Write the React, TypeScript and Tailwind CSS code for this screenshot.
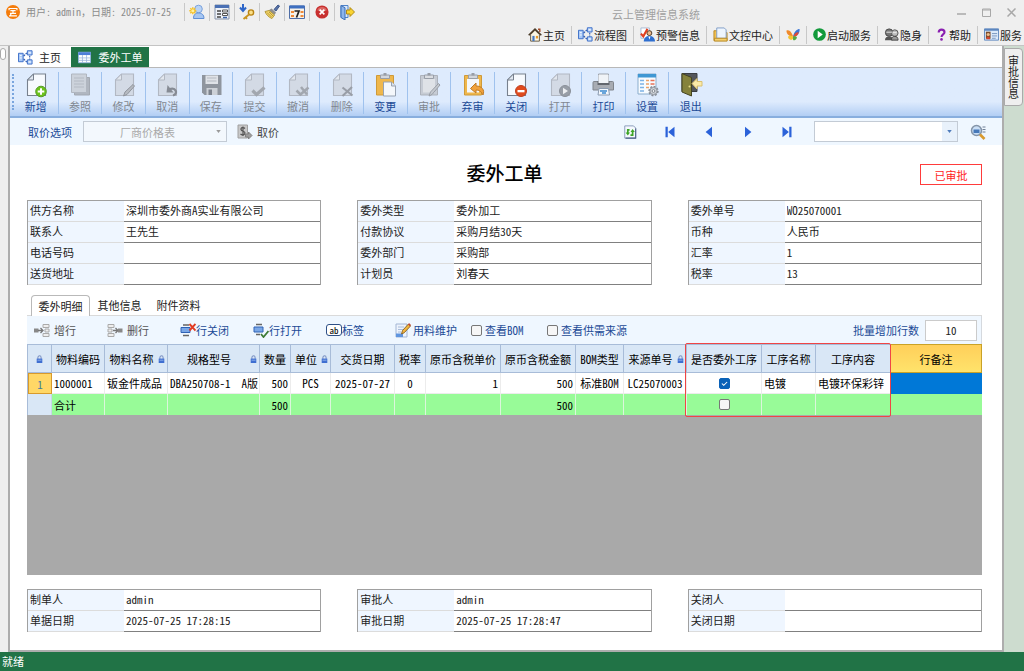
import React from "react";

type Children = { children?: React.ReactNode };

function Glyph({ children, box = 16, cls = "size-4" }: Children & { box?: number; cls?: string }) {
  return (
    <svg viewBox={`0 0 ${box} ${box}`} className={`${cls} shrink-0`} fill="none" aria-hidden="true">
      {children}
    </svg>
  );
}

/* ---------- small icons ---------- */

const LogoIcon = () => (
  <Glyph cls="size-[14px]">
    <circle cx="8" cy="8" r="8" fill="#f57c0b" />
    <path d="M3.500 6V4h9v2M5 6.500h6M8 6.500v3M4.500 9.500h7M6 9.500l-1 2.500M3.500 12.500h9" stroke="#fff" strokeWidth="1.300" />
  </Glyph>
);
const UserStarIcon = () => (
  <Glyph>
    <circle cx="9.500" cy="5" r="3.800" fill="#b9d3f5" stroke="#7ba2dc" />
    <path d="M4.500 14.500c0-4 2-5.500 5-5.500s5.500 1.500 5.500 5.500z" fill="#a6c6f2" stroke="#5f8fd6" />
    <path d="M3.800 3.200v7M.3 6.700h7M1.300 4.200l5 5M6.300 4.200l-5 5" stroke="#f6c22b" strokeWidth="1.500" />
    <circle cx="3.800" cy="6.700" r="1.500" fill="#fff1a0" />
  </Glyph>
);
const FormIcon = () => (
  <Glyph>
    <path d="M1 1h14v14H1z" fill="#eef2f8" stroke="#8794aa" />
    <path d="M1 1h14v3H1z" fill="#4a70b4" />
    <path d="M3 7h4M3 10h4M3 13h4" stroke="#444" strokeWidth="1.300" />
    <path d="M8.500 6h5v2h-5zM8.500 9.500h5v2h-5z" fill="#fff" stroke="#555" />
    <path d="M9 13.500h4" stroke="#3a62a8" strokeWidth="1.500" />
  </Glyph>
);
const KeyIcon = () => (
  <Glyph>
    <path d="M4 0v6M1 3.500 4 7l3-3.500" stroke="#2e66c9" strokeWidth="2" />
    <circle cx="12" cy="8.500" r="2.600" fill="#fbe08a" stroke="#b98414" strokeWidth="1.400" />
    <path d="M10 10.500 4.500 15M6.500 13l1.500 1.800" stroke="#c9941f" strokeWidth="1.800" />
  </Glyph>
);
const BrushIcon = () => (
  <Glyph>
    <path d="m10 5.500 4-4.500 1.500 1L12 7z" fill="#5873a8" stroke="#3d5688" />
    <path d="M7.500 4.500 12 8.500 10.500 11 4.500 6.500z" fill="#8f8f8f" />
    <path d="M5 6.500 1 7.500c1 3 4 6 7 7l2.500-3.500z" fill="#f3d56a" stroke="#b59a3c" />
    <path d="M3 8.500 7.500 13M5 8l4 4" stroke="#b99b36" />
  </Glyph>
);
const CalendarIcon = () => (
  <Glyph>
    <path d="M.5 2h15v12.500H.5z" fill="#f6f2ea" stroke="#4f6ea6" />
    <path d="M.5 1.500h15v3H.5z" fill="#3e6fc0" />
    <path d="M2 7h3v2H2zM11.500 7h3v2h-3zM2 11h3v2H2zM11.500 11h3v2h-3z" fill="#f08b3a" />
    <path d="M5.500 7H10L7.500 13.500" stroke="#222" strokeWidth="1.700" />
  </Glyph>
);
const StopIcon = () => (
  <Glyph cls="size-[14px]">
    <circle cx="8" cy="8" r="7.500" fill="#c8302f" />
    <path d="M2.500 6C4 1 12 1 13.500 6c-3 2-8 2-11 0z" fill="#e2807c" opacity=".7" />
    <path d="m5.300 5.300 5.400 5.400M10.700 5.300l-5.400 5.400" stroke="#fff" strokeWidth="1.900" />
  </Glyph>
);
const LogoutIcon = () => (
  <Glyph>
    <path d="M2 1.500h7v12H2z" fill="#dbe9fb" stroke="#4f83c9" />
    <path d="m2 1.500 4 2.200V16L2 13.500z" fill="#8cb4ea" stroke="#3b6fb8" />
    <path d="M15.500 8 11 3.500V6H7.500v4H11v2.500z" fill="#f9d331" stroke="#b08a14" />
  </Glyph>
);
const HomeIcon = () => (
  <Glyph cls="size-[14px]">
    <path d="M3 7.500 8 2.500l5 5v7.500H3z" fill="#fbf6e3" stroke="#5a4a33" />
    <path d="M.8 8.300 8 1.300l7.200 7" stroke="#4a3b28" strokeWidth="1.800" />
    <path d="M11.500 1.500h2v3" stroke="#a34a28" strokeWidth="1.600" />
    <path d="M5 9h2.500v6H5z" fill="#4579c2" />
    <path d="M9 9h2.500v3H9z" fill="#e79a2d" />
  </Glyph>
);
const FlowIcon = () => (
  <Glyph cls="size-[15px]">
    <path d="M.5 3.500h5v9h-5z" fill="#a9c9f7" stroke="#3a6cc8" />
    <path d="M10 .8h5v4.500h-5zM10 10.500h5V15h-5z" fill="#bcd6fa" stroke="#3a6cc8" />
    <path d="M2 6h2M2 8.500h2M11.500 3h2M11.500 12.800h2" stroke="#fff" />
    <path d="M6 6.500 9.500 3M6 9.500l3.500 3.500M12.500 6v4" stroke="#2857b0" strokeDasharray="2 1" strokeWidth="1.200" />
  </Glyph>
);
const AlertIcon = () => (
  <Glyph cls="size-[15px]">
    <path d="M1 1h9v11H1z" fill="#fff" stroke="#a9bad3" />
    <circle cx="10" cy="6.500" r="2.600" fill="#e9b98b" stroke="#4a3320" />
    <path d="M4 15.500c0-4 2.500-6 6-6s6 2 6 6z" fill="#2f6fd0" />
    <path d="m9 10 1 3.500 1.200-3.500z" fill="#fff" />
    <path d="m1 7 2.500 3L8 2" stroke="#e0401f" strokeWidth="2.200" />
  </Glyph>
);
const FolderIcon = () => (
  <Glyph cls="size-[15px]">
    <path d="M1 4h5l1 2h8v8.500H1z" fill="#f2c04f" stroke="#b98a25" />
    <path d="M4 1h8l2 2v9H4z" fill="#eef5fd" stroke="#7e9cc6" />
    <path d="M1.500 12h13.500v3H1.500z" fill="#f5cf6b" stroke="#b98a25" />
  </Glyph>
);
const ButterflyIcon = () => (
  <Glyph cls="size-[14px]">
    <path d="M8 9C6 3 2 1.500.5 3c0 3.500 3 6.500 7 6.500z" fill="#f08a2c" />
    <path d="M8 10C9 3.500 13 1 15.500 1c.5 4-2 8-7 9z" fill="#3b76d6" />
    <path d="M8 10C10 6 12 4.500 14.500 5c-.5 3-3 5-6.500 5z" fill="#e14a35" />
    <path d="M8 9.500C4 7.500 2 9 2.500 11c1.500 3 4.500 3 5.500 1z" fill="#f5c431" />
    <path d="M8 10c2-1 4-.5 4.500 1-1.500 3-4 4-4.500 2z" fill="#57a844" />
  </Glyph>
);
const PlayIcon = () => (
  <Glyph cls="size-[13px]">
    <circle cx="8" cy="8" r="7.800" fill="#129a3b" />
    <path d="M5.800 3.500v9L12 8z" fill="#fff" />
  </Glyph>
);
const HiddenIcon = () => (
  <Glyph cls="size-[15px]">
    <circle cx="5.500" cy="6" r="4" fill="#777" stroke="#444" />
    <circle cx="11.500" cy="6.500" r="3.500" fill="#bbb" stroke="#555" />
    <path d="M2.500 5.500h6M9.500 6h4" stroke="#eee" />
    <path d="M1 14c0-3 2-4 4.500-4s4 1 4 4z" fill="#555" />
    <path d="M8 14c0-3 1.500-4 3.500-4S15 11 15 14z" fill="#999" stroke="#444" />
  </Glyph>
);
const HelpIcon = () => (
  <Glyph cls="size-[13px]">
    <path d="M4.500 5.500C4.500 3 6 2 8 2s3.700 1.200 3.700 3.200C11.700 7.800 8 8 8 11" stroke="#8a1fb0" strokeWidth="2.600" />
    <circle cx="8" cy="14" r="1.600" fill="#8a1fb0" />
  </Glyph>
);
const CardIcon = () => (
  <Glyph cls="size-[15px]">
    <path d="M.5 2h15v12H.5z" fill="#dbe9fa" stroke="#5c86bf" />
    <path d="M.5 2h15v2H.5z" fill="#5c86bf" />
    <path d="M2 5h5v7.500H2z" fill="#7b4d2c" />
    <circle cx="4.500" cy="8" r="1.700" fill="#edbd8e" />
    <path d="M2.500 13c0-2 1-3 2-3s2 1 2 3z" fill="#d4442c" />
    <path d="M8.500 7h5.500M8.500 9.500h5.500M8.500 12h4" stroke="#7593bd" />
  </Glyph>
);
const SheetIcon = () => (
  <Glyph cls="size-[13px]">
    <path d="M.5 1.500h15v13H.5z" fill="#fff" stroke="#8db0e6" />
    <path d="M.5 1.500h15v3.500H.5z" fill="#4f7fd8" />
    <path d="M1 8.500h14M1 11.500h14M5.500 5v9.500M10.500 5v9.500" stroke="#9cb6dc" />
  </Glyph>
);
const PriceIcon = () => (
  <Glyph>
    <path d="M1 1h9.500v13H1z" fill="#c9c9c9" stroke="#a0a0a0" />
    <path d="M8 4.500C6.500 3 3.500 3.500 4 5.500s4 1.500 4 3.500-3 2.500-4.500 1M6 2.500v9.500" stroke="#555" strokeWidth="1.200" />
    <path d="M15 11.500 11.500 15v-2H8.500v-3h3V8z" fill="#9d9d9d" stroke="#808080" />
  </Glyph>
);
const RefreshIcon = () => (
  <Glyph cls="size-[14px]">
    <path d="M2 1h10l2.500 2.500V15H2z" fill="#f5f9ff" stroke="#7f92b3" />
    <path d="M14.500 4v11H3" stroke="#4d6186" strokeWidth="1.200" />
    <path d="M7.500 5.500H5.500v4M8.500 11.500h2.500V7" stroke="#3ea526" strokeWidth="2" />
    <path d="m3 8.500 2.500 3.500L8 8.500zM8.500 8 11 4.500 13.500 8z" fill="#3ea526" />
  </Glyph>
);
const StepIcon = ({ d }: { d: string }) => (
  <Glyph cls="size-3">
    <path d={d} fill="#2b62d9" />
  </Glyph>
);
const SearchIcon = () => (
  <Glyph>
    <circle cx="6.500" cy="6.500" r="5" fill="#c9def5" stroke="#8494a8" strokeWidth="1.500" />
    <path d="M3.500 5.500h6v3.500h-6z" fill="#4678b8" />
    <path d="m10 10.500 4.500 4.500" stroke="#d99a2f" strokeWidth="2.600" />
    <path d="M12.500 3h3M12.500 5.500h3M12.500 8h3" stroke="#6f7f95" />
  </Glyph>
);
const LockIcon = () => (
  <svg viewBox="0 0 8 10" className="h-2 w-[7px] shrink-0" fill="none" aria-hidden="true">
    <path d="M2 5V3a2 2 0 0 1 4 0v2" stroke="#7d93c4" strokeWidth="1.300" />
    <path d="M.5 4.500h7V10h-7z" fill="#3f6fd1" />
    <path d="M1.500 6.500h5" stroke="#9dbbf0" />
  </svg>
);
const AddRowIcon = () => (
  <Glyph>
    <path d="M0 6.500h4.500v4H0z" fill="#888" />
    <path d="M4 8.500h5M6.500 6 9 8.500 6.500 11" stroke="#777" strokeWidth="1.300" />
    <path d="M9 2.500h6v3H9zM11 7h4v3h-4zM9 11.500h6v3H9z" fill="#eee" stroke="#aaa" />
  </Glyph>
);
const RemoveRowIcon = () => (
  <Glyph>
    <path d="M1 2.500h6v3H1zM1 7h4v3H1zM1 11.500h6v3H1z" fill="#eee" stroke="#aaa" />
    <path d="M6 8.500h5M8.500 6 11 8.500 8.500 11" stroke="#777" strokeWidth="1.300" />
    <path d="M11 6.500h4.500v4H11z" fill="#888" />
  </Glyph>
);
const CloseRowIcon = () => (
  <Glyph>
    <path d="M3 3h6M3 13.500h6" stroke="#666" strokeWidth="1.300" />
    <path d="M1 5.500h9v5H1z" fill="#7aa7e6" stroke="#2f62b5" />
    <path d="m9.500 2 6 6.500M15.500 2l-6 6.500" stroke="#e23b22" strokeWidth="1.900" />
  </Glyph>
);
const OpenRowIcon = () => (
  <Glyph>
    <path d="M3 2.500h6M3 12.500h4" stroke="#666" strokeWidth="1.300" />
    <path d="M1 5h9v5H1z" fill="#7aa7e6" stroke="#2f62b5" />
    <path d="m8 12 2.500 3 5-6" stroke="#3c7a35" strokeWidth="1.800" />
  </Glyph>
);
const EditIcon = () => (
  <Glyph>
    <path d="M1 2h11v13H1z" fill="#edf3fc" stroke="#a3b6d4" />
    <path d="M3 5h6M3 7.500h5M3 10h3" stroke="#a9bcd9" />
    <path d="M1 11.500h7v3.500H1z" fill="#5f95df" />
    <path d="m6.500 12 1-3.500L13.500 2l2 2-6.300 6.800z" fill="#f3b63c" stroke="#8c6a2f" />
    <path d="m13 2.500 1-1.500 2 2-1 1.300z" fill="#c24a33" />
  </Glyph>
);

/* ---------- toolbar icons ---------- */

const BigIcon = ({ children }: Children) => (
  <svg viewBox="0 0 24 26" className="h-[26px] w-6 shrink-0" fill="none" aria-hidden="true">
    {children}
  </svg>
);
const Page = ({ off = false }: { off?: boolean }) => (
  <>
    <path d="M9.500 2h12v21.500h-18V8z" fill={off ? "#d3dae5" : "#f7fafe"} stroke={off ? "#b2b8c3" : "#78818e"} strokeWidth="1.100" />
    <path d="M9.500 2v6h-6z" fill={off ? "#e2e7ee" : "#dfe6ef"} stroke={off ? "#b2b8c3" : "#78818e"} />
  </>
);
const Clip = ({ off = false }: { off?: boolean }) => (
  <>
    <path d="M3.500 3.500h17v19.500h-17z" fill={off ? "#c6cbd4" : "#efb74c"} stroke={off ? "#adb2bb" : "#cf9a38"} />
    <path d="M7.500 3h9v3.500h-9z" fill={off ? "#dadde2" : "#d3d7dd"} stroke="#989ea8" />
    <path d="M10.500 1h3v2.500h-3z" fill="#989ea8" />
  </>
);

const NewDoc = () => (
  <BigIcon>
    <Page />
    <circle cx="17" cy="19.500" r="5.300" fill="#6cc21c" stroke="#559c26" />
    <path d="M17 16.200v6.600M13.700 19.500h6.600" stroke="#fff" strokeWidth="2" />
  </BigIcon>
);
const CopyDoc = () => (
  <BigIcon>
    <path d="M6.500 5.500h15v17.500h-15z" fill="#b0b6c0" stroke="#a3a9b3" />
    <path d="M3.500 2h15v18.500h-15z" fill="#ccd2db" stroke="#b0b6c0" />
    <path d="M6 6h10M6 9h10M6 12h10M6 15h10" stroke="#b4bac4" />
  </BigIcon>
);
const EditDoc = () => (
  <BigIcon>
    <Page off />
    <path d="m11.500 24 1.500-4 8-7.500 1.500 1.500-7.500 8.500z" fill="#b6bac1" stroke="#90959d" />
  </BigIcon>
);
const UndoDoc = () => (
  <BigIcon>
    <Page off />
    <path d="M14 17.500c7-3 9.500 4.500 4 6" stroke="#868b94" strokeWidth="2.300" />
    <path d="m12.500 13-1 7.500h7z" fill="#868b94" />
  </BigIcon>
);
const SaveDoc = () => (
  <BigIcon>
    <path d="M3 3h19.500v20H5.500L3 20.500z" fill="#8f959e" />
    <path d="M6.500 3.500h12.500v8.500H6.500z" fill="#dfe2e7" />
    <path d="M8 6h9.500M8 9h9.500" stroke="#b4b9c1" />
    <path d="M7.500 16h11v7h-11z" fill="#cdd1d7" />
    <path d="M9.500 17.500h3.500V23H9.500z" fill="#7d838d" />
  </BigIcon>
);
const SubmitDoc = () => (
  <BigIcon>
    <Page off />
    <path d="m10.500 18.500 4 4 8-7" stroke="#a2a7af" strokeWidth="3.200" />
  </BigIcon>
);
const RevokeDoc = () => (
  <BigIcon>
    <Page off />
    <path d="m10.500 18.500 4 4 8-7M15 15l6 7.500" stroke="#a2a7af" strokeWidth="2.500" />
  </BigIcon>
);
const DeleteDoc = () => (
  <BigIcon>
    <Page off />
    <path d="m12.500 15.500 10 8M22 15l-9.500 9" stroke="#999ea7" strokeWidth="2.100" />
  </BigIcon>
);
const ChangeDoc = () => (
  <BigIcon>
    <Clip />
    <path d="M10.500 10h8l4 4v10h-12z" fill="#f4f7fb" stroke="#97a2b2" />
    <path d="M18.500 10v4h4" fill="#dbe2ec" stroke="#97a2b2" />
  </BigIcon>
);
const ApproveDoc = () => (
  <BigIcon>
    <Clip off />
    <path d="M6 7h12v13.500H6z" fill="#dfe2e7" />
    <path d="m12 24 1.500-4 8-8.500 1.500 1.500-8 9.500z" fill="#c4c8ce" stroke="#999ea7" />
  </BigIcon>
);
const UnapproveDoc = () => (
  <BigIcon>
    <Clip />
    <path d="M6 7h12v13.500H6z" fill="#f4f7fb" />
    <path d="m15 11-5.500 5.500L15 21v-3c3 0 5 1 7 5 2-5-1-9-7-9z" fill="#f0a13c" stroke="#c07a24" />
  </BigIcon>
);
const CloseDoc = () => (
  <BigIcon>
    <Page />
    <circle cx="17" cy="19" r="5.500" fill="#e04a1c" stroke="#c04020" />
    <path d="M13.500 18h7v2.300h-7z" fill="#fff" />
  </BigIcon>
);
const OpenDoc = () => (
  <BigIcon>
    <Page off />
    <circle cx="17" cy="19" r="5.500" fill="#989ea7" stroke="#8a9099" />
    <path d="m15 15.800 5 3.200-5 3.200z" fill="#eceef1" />
  </BigIcon>
);
const PrintDoc = () => (
  <BigIcon>
    <path d="M7.500 2h10v9h-10z" fill="#f6f8fb" stroke="#9da3ad" />
    <path d="M3 9.500h18.500a1 1 0 0 1 1 1V18H2v-7.500a1 1 0 0 1 1-1z" fill="#a8acb3" stroke="#80858d" />
    <path d="M6.500 9h12v4h-12z" fill="#62666d" />
    <path d="M7.500 3h10v8h-10z" fill="#f0f3f7" />
    <path d="M8 16.500h9.500l1 6.500H7z" fill="#f4f8fd" stroke="#8b9bb0" />
    <path d="M9 19h7M11 21h4" stroke="#3d8ad0" strokeWidth="1.400" />
  </BigIcon>
);
const SettingsDoc = () => (
  <BigIcon>
    <path d="M3 2h18v20H3z" fill="#f7fbff" stroke="#8badcc" />
    <path d="M3 2h18v3.500H3z" fill="#3f97d3" />
    <path d="M5 8.500h4M5 12h4M5 15.500h4M5 19h4" stroke="#7db2e6" strokeWidth="1.600" />
    <path d="M11 8.500h3M11 12h3M11 15.500h3" stroke="#eda36a" strokeWidth="1.600" />
    <path d="M15.500 8.500h4M15.500 12h4" stroke="#e87258" strokeWidth="1.600" />
    <circle cx="18.500" cy="19" r="4.300" fill="#c3c7cd" stroke="#868c95" strokeWidth="1.800" strokeDasharray="2 1.300" />
    <circle cx="18.500" cy="19" r="3.500" fill="#ced2d7" stroke="#979ca5" />
    <circle cx="18.500" cy="19" r="1.400" fill="#f5f6f8" stroke="#80868e" />
  </BigIcon>
);
const ExitDoc = () => (
  <BigIcon>
    <path d="M3 1.500h15v18H3z" fill="#53565b" stroke="#3b3e42" />
    <path d="m3 1.500 9.500 4V24L3 20z" fill="#85823c" stroke="#44431f" />
    <circle cx="10.500" cy="14.500" r="1" fill="#e8df8b" />
    <path d="m13 11.500 5-5v3h5v4.500h-5v3z" fill="#fbeaa8" stroke="#d9c070" />
  </BigIcon>
);

/* ---------- data ---------- */

const quick = [UserStarIcon, FormIcon, KeyIcon, BrushIcon, CalendarIcon, StopIcon, LogoutIcon];
const quickNames = ["切换用户", "表单", "修改密码", "清理", "日历", "停止", "注销"];

const menu: { icon: () => React.ReactElement; text?: string }[] = [
  { icon: HomeIcon, text: "主页" },
  { icon: FlowIcon, text: "流程图" },
  { icon: AlertIcon, text: "预警信息" },
  { icon: FolderIcon, text: "文控中心" },
  { icon: ButterflyIcon },
  { icon: PlayIcon, text: "启动服务" },
  { icon: HiddenIcon, text: "隐身" },
  { icon: HelpIcon, text: "帮助" },
  { icon: CardIcon, text: "服务" },
];

const tools: { icon: () => React.ReactElement; text: string; off?: boolean }[] = [
  { icon: NewDoc, text: "新增" },
  { icon: CopyDoc, text: "参照", off: true },
  { icon: EditDoc, text: "修改", off: true },
  { icon: UndoDoc, text: "取消", off: true },
  { icon: SaveDoc, text: "保存", off: true },
  { icon: SubmitDoc, text: "提交", off: true },
  { icon: RevokeDoc, text: "撤消", off: true },
  { icon: DeleteDoc, text: "删除", off: true },
  { icon: ChangeDoc, text: "变更" },
  { icon: ApproveDoc, text: "审批", off: true },
  { icon: UnapproveDoc, text: "弃审" },
  { icon: CloseDoc, text: "关闭" },
  { icon: OpenDoc, text: "打开", off: true },
  { icon: PrintDoc, text: "打印" },
  { icon: SettingsDoc, text: "设置" },
  { icon: ExitDoc, text: "退出" },
];

const steps = [
  { name: "首张", d: "M2 1h3v14H2zM14 1v14L5.500 8z" },
  { name: "上一张", d: "M12 1v14L3.500 8z" },
  { name: "下一张", d: "M4 1v14l8.500-7z" },
  { name: "末张", d: "M11 1h3v14h-3zM2 1v14l8.500-7z" },
];

type Field = [string, string];
const head: Field[][] = [
  [["供方名称", "深圳市委外商A实业有限公司"], ["联系人", "王先生"], ["电话号码", ""], ["送货地址", ""]],
  [["委外类型", "委外加工"], ["付款协议", "采购月结30天"], ["委外部门", "采购部"], ["计划员", "刘春天"]],
  [["委外单号", "WO25070001"], ["币种", "人民币"], ["汇率", "1"], ["税率", "13"]],
];
const foot: Field[][] = [
  [["制单人", "admin"], ["单据日期", "2025-07-25 17:28:15"]],
  [["审批人", "admin"], ["审批日期", "2025-07-25 17:28:47"]],
  [["关闭人", ""], ["关闭日期", ""]],
];

type Column = { title: string; w: string; lock?: boolean; value: string; sum?: string; align?: string };
const columns: Column[] = [
  { title: "物料编码", w: "w-[53px]", value: "1000001", sum: "合计" },
  { title: "物料名称", w: "w-[63px]", lock: true, value: "钣金件成品" },
  { title: "规格型号", w: "w-[92px]", lock: true, value: "DBA250708-1  A版" },
  { title: "数量", w: "w-[31px]", value: "500", sum: "500", align: "text-right" },
  { title: "单位", w: "w-[40px]", lock: true, value: "PCS", align: "text-center" },
  { title: "交货日期", w: "w-[64px]", value: "2025-07-27", align: "text-center" },
  { title: "税率", w: "w-[31px]", value: "0", align: "text-center" },
  { title: "原币含税单价", w: "w-[75px]", value: "1", align: "text-right" },
  { title: "原币含税金额", w: "w-[75px]", value: "500", sum: "500", align: "text-right" },
  { title: "BOM类型", w: "w-[48px]", value: "标准BOM", align: "text-center" },
  { title: "来源单号", w: "w-[63px]", lock: true, value: "LC25070003", align: "text-center" },
  { title: "是否委外工序", w: "w-[75px]", value: "check" },
  { title: "工序名称", w: "w-[54px]", value: "电镀" },
  { title: "工序内容", w: "w-[75px]", value: "电镀环保彩锌" },
];

/* ---------- parts ---------- */

function Tick({ label, defaultChecked = false }: { label: string; defaultChecked?: boolean }) {
  return (
    <span className="inline-grid place-items-center align-middle">
      <input
        type="checkbox"
        aria-label={label}
        defaultChecked={defaultChecked}
        className="peer col-start-1 row-start-1 size-[11px] appearance-none rounded-[2px] border border-[#777] bg-[#f6f6f6] checked:border-[#0a62b8] checked:bg-[#0a62b8]"
      />
      <svg viewBox="0 0 12 12" className="pointer-events-none col-start-1 row-start-1 hidden size-[9px] peer-checked:block" fill="none">
        <path d="m2.500 6 2.500 2.500L9.500 4" stroke="#fff" strokeWidth="1.400" />
      </svg>
    </span>
  );
}

function Fields({ rows }: { rows: Field[] }) {
  return (
    <div className="border-x border-t border-[#a0a0a0]">
      {rows.map(([name, value]) => (
        <div key={name} className="flex h-[21px]">
          <label htmlFor={name} className="w-24 shrink-0 border-b border-[#dcdcdc] bg-[#eff6ff] px-0.5 leading-[18px]">
            {name}
          </label>
          <input
            id={name}
            defaultValue={value}
            readOnly
            className="min-w-0 flex-1 border-b border-[#808080] bg-white px-0.5 pb-0.5 outline-none"
          />
        </div>
      ))}
    </div>
  );
}

function RowTool({ icon, text, off = false, wide = "w-[73px]", gap = "gap-0" }: { icon: React.ReactNode; text: string; off?: boolean; wide?: string; gap?: string }) {
  return (
    <button disabled={off} className={`flex shrink-0 items-center ${gap} ${wide} ${off ? "text-[#555]" : "text-[#1c4a96]"}`}>
      {icon}
      <span>{text}</span>
    </button>
  );
}

export default function App() {
  return (
    <div className="flex min-h-screen flex-col overflow-hidden bg-[#efefef] font-['Noto_Sans_Mono_CJK_SC','Noto_Sans_CJK_SC',sans-serif] text-[11px] leading-4 text-[#222]">
      <header className="border-b border-[#c4c4c4]">
        <div className="grid h-6 grid-cols-[17fr_auto_9fr] items-center">
          <div className="flex items-center pl-1.5 text-[#8c8c8c]">
            <LogoIcon />
            <span className="ml-1.5 w-[158px] whitespace-pre text-[10px]">用户: admin，日期: 2025-07-25</span>
            {quick.map((Icon, i) => (
              <button key={quickNames[i]} aria-label={quickNames[i]} className="flex h-[18px] w-[25px] items-center justify-center border-l border-[#c8c8c8]">
                <Icon />
              </button>
            ))}
          </div>
          <h1 className="pt-1 text-[#a0a0a0]">云上管理信息系统</h1>
          <div className="flex items-center justify-end gap-4 pr-2 text-[#a8a8a8]">
            <button aria-label="最小化">
              <Glyph cls="size-[9px]" box={9}><path d="M0 6h9" stroke="currentColor" strokeWidth="1.500" /></Glyph>
            </button>
            <button aria-label="最大化">
              <Glyph cls="size-[9px]" box={9}><path d="M.5 1h8v7.500h-8zM.5 2h8" stroke="currentColor" /></Glyph>
            </button>
            <button aria-label="关闭窗口">
              <Glyph cls="size-[9px]" box={9}><path d="m.5.5 8 8M8.500.5l-8 8" stroke="currentColor" strokeWidth="1.500" /></Glyph>
            </button>
          </div>
        </div>
        <nav className="flex h-[21px] items-center justify-end">
          {menu.map(({ icon: Icon, text }, i) => (
            <a
              key={i}
              href="#"
              aria-label={text ?? "工具"}
              className={`flex h-[18px] shrink-0 items-center gap-px px-[6px] last:pr-0.5 ${i ? "border-l border-[#c8c8c8]" : ""}`}
            >
              <Icon />
              {text && <span>{text}</span>}
            </a>
          ))}
        </nav>
      </header>

      <div className="flex flex-1 bg-[#cddccf]">
        <aside className="w-2 shrink-0 bg-[#efefef] pt-0.5">
          <button aria-label="展开导航" className="block h-3 w-1.5 rounded-sm border border-[#aaa] bg-white" />
        </aside>

        <main className="flex min-w-0 flex-1 flex-col border-x-2 border-b-2 border-[#adadad] bg-white">
          <div className="flex h-[22px] items-end border-b border-[#b8b8b8] pl-2">
            <button className="flex h-5 w-[53px] items-center gap-1.5">
              <FlowIcon />
              <span>主页</span>
            </button>
            <button className="flex h-5 w-[78px] items-center justify-center gap-2 bg-[#217346] text-white">
              <SheetIcon />
              <span>委外工单</span>
            </button>
          </div>

          <div className="flex h-[50px] border-b-2 border-[#88aede] bg-gradient-to-b from-[#deebfd] from-70% to-[#b2cef4] pl-0.5">
            <div className="my-1.5 w-0 border-l-2 border-dotted border-[#79a5de]" />
            <div className="grid w-[698px] grid-cols-16 py-1">
              {tools.map(({ icon: Icon, text, off }, i) => (
                <button
                  key={text}
                  disabled={off}
                  className={`flex flex-col items-center ${i ? "border-l border-[#9fc2ee]" : ""} ${off ? "text-[#818790]" : "text-[#1c4a96]"}`}
                >
                  <Icon />
                  <span className="leading-4">{text}</span>
                </button>
              ))}
            </div>
          </div>

          <div className="flex h-[27px] shrink-0 items-center bg-[#eff7ff] pl-[18px] pr-4">
            <label htmlFor="price" className="w-[55px] text-[#1c4a96]">取价选项</label>
            <span className="grid w-36 items-center">
              <select id="price" disabled className="col-start-1 row-start-1 h-[21px] appearance-none border border-[#c3cbd5] bg-[#f3f8fd] pl-9 text-[#a9a9a9]">
                <option>厂商价格表</option>
              </select>
              <svg viewBox="0 0 6 4" className="pointer-events-none col-start-1 row-start-1 mr-1.5 h-[3px] w-[5px] justify-self-end"><path d="M0 0h6L3 4z" fill="#999" /></svg>
            </span>
            <button className="ml-2.5 flex items-center gap-1 text-[#444]">
              <PriceIcon />
              <span>取价</span>
            </button>
            <div className="ml-auto flex items-center">
              <button aria-label="刷新" className="flex w-10 justify-center"><RefreshIcon /></button>
              {steps.map((s) => (
                <button key={s.name} aria-label={s.name} className="flex w-[39px] justify-center"><StepIcon d={s.d} /></button>
              ))}
              <span className="ml-2 grid w-36 items-center">
                <select aria-label="单据查找" className="col-start-1 row-start-1 h-[21px] appearance-none border border-[#c3cbd5] bg-white">
                  <option> </option>
                </select>
                <span className="pointer-events-none col-start-1 row-start-1 mr-px flex h-[19px] w-[15px] items-center justify-center justify-self-end bg-[#e8f1fb]">
                  <svg viewBox="0 0 6 4" className="h-[3px] w-[5px]"><path d="M0 0h6L3 4z" fill="#4f7bbb" /></svg>
                </span>
              </span>
              <button aria-label="查询" className="ml-3"><SearchIcon /></button>
            </div>
          </div>

          <div className="flex flex-1 flex-col pb-[18px] pl-[17px] pr-5">
            <div className="grid h-[55px] grid-cols-[1fr_auto_1fr] items-center">
              <h2 className="col-start-2 font-['Noto_Sans_CJK_SC',sans-serif] text-[19px] font-medium leading-6 text-black">委外工单</h2>
              <span className="mt-1 flex h-[21px] w-[62px] items-center justify-center justify-self-end border border-[#ff3b3b] text-[#ff1c1c]">已审批</span>
            </div>

            <div className="grid grid-cols-3 gap-9">
              {head.map((rows, i) => <Fields key={i} rows={rows} />)}
            </div>

            <div role="tablist" className="mt-2.5 flex h-[21px] items-end border-b border-[#dadada] pl-1">
              <button role="tab" aria-selected="true" className="-mb-px h-[21px] w-[59px] rounded-t-sm border border-b-0 border-[#b9b9b9] bg-white">委外明细</button>
              <button role="tab" aria-selected="false" className="h-5 w-[59px]">其他信息</button>
              <button role="tab" aria-selected="false" className="h-5 w-[59px]">附件资料</button>
            </div>

            <div className="flex h-7 items-center border-r border-[#d5d9de] bg-[#eff7ff] pl-[7px] pr-1 text-[#1c4a96]">
              <RowTool icon={<AddRowIcon />} text="增行" off gap="gap-1" />
              <RowTool icon={<RemoveRowIcon />} text="删行" off gap="gap-1" />
              <RowTool icon={<CloseRowIcon />} text="行关闭" />
              <RowTool icon={<OpenRowIcon />} text="行打开" />
              <RowTool
                icon={<span className="flex h-3 w-4 items-center justify-center rounded-[3px] border border-[#2d4f86] bg-white text-[9px] leading-none text-black">ab</span>}
                text="标签"
                wide="w-[69px]"
              />
              <RowTool icon={<EditIcon />} text="用料维护" wide="w-[76px]" gap="gap-0.5" />
              <label className="flex w-[76px] items-center gap-[3px]"><Tick label="查看BOM" /><span>查看BOM</span></label>
              <label className="flex items-center gap-[3px]"><Tick label="查看供需来源" /><span>查看供需来源</span></label>
              <label htmlFor="batch" className="ml-auto">批量增加行数</label>
              <input id="batch" defaultValue="10" className="ml-1.5 h-[21px] w-[52px] border border-[#cbcbcb] bg-white text-center text-[#222]" />
            </div>

            <div className="relative min-h-40 flex-1 bg-[#a9a9a9]">
              <table className="w-full table-fixed border-separate border-spacing-0 border-l border-[#a8bcd8] text-black">
                <thead>
                  <tr className="h-[29px]">
                    <th className="w-6 border-b border-r border-t border-[#a8bcd8] bg-[#d9e7f6] p-0">
                      <span className="flex justify-center"><LockIcon /></span>
                    </th>
                    {columns.map((c) => (
                      <th key={c.title} className={`${c.w} border-b border-r border-t border-[#a8bcd8] bg-[#d9e7f6] p-0 font-normal`}>
                        <span className="flex items-center whitespace-nowrap">
                          <span className="flex-1 text-center">{c.title}</span>
                          {c.lock && <span className="pr-0.5"><LockIcon /></span>}
                        </span>
                      </th>
                    ))}
                    <th className="border-b border-r border-t border-[#c9a227] bg-gradient-to-b from-[#ffcf5a] to-[#ffe36b] p-0 font-normal">行备注</th>
                  </tr>
                </thead>
                <tbody>
                  <tr className="h-[21px]">
                    <td className="border border-[#d89a2b] bg-[#ffd766] p-0 text-center text-[#3f7d9a]">1</td>
                    {columns.map((c) => (
                      <td key={c.title} className={`whitespace-pre border-b border-r border-[#ececec] bg-white p-0 px-0.5 leading-4 ${c.align ?? ""}`}>
                        {c.value === "check" ? <span className="flex justify-center"><Tick label="委外工序" defaultChecked /></span> : c.value}
                      </td>
                    ))}
                    <td className="bg-[#0078d7] p-0" />
                  </tr>
                  <tr className="h-[21px]">
                    <td className="border-r border-[#c7d5e8] bg-[#d9e7f6] p-0" />
                    {columns.map((c) => (
                      <td key={c.title} className={`border-r border-[#dcf5dc] bg-[#98fb98] p-0 px-0.5 leading-4 ${c.align ?? ""}`}>
                        {c.value === "check" ? <span className="flex justify-center"><Tick label="合计委外工序" /></span> : c.sum}
                      </td>
                    ))}
                    <td className="bg-[#98fb98] p-0" />
                  </tr>
                </tbody>
              </table>
              <div className="pointer-events-none absolute -top-px left-[658px] h-[74px] w-[206px] rounded-xs border border-[#f04545]" />
            </div>

            <div className="mt-3.5 grid grid-cols-3 gap-9">
              {foot.map((rows, i) => <Fields key={i} rows={rows} />)}
            </div>
          </div>
        </main>

        <aside className="w-5 shrink-0 pt-0.5">
          <button className="flex h-[58px] w-[19px] items-center justify-center rounded-r-sm border border-[#aaa] bg-[#efefef]">
            <span className="w-[11px] text-center leading-[11px]">审批信息</span>
          </button>
        </aside>
      </div>

      <footer className="h-[19px] shrink-0 bg-[#217346] px-0.5 leading-[19px] text-white">就绪</footer>
    </div>
  );
}
